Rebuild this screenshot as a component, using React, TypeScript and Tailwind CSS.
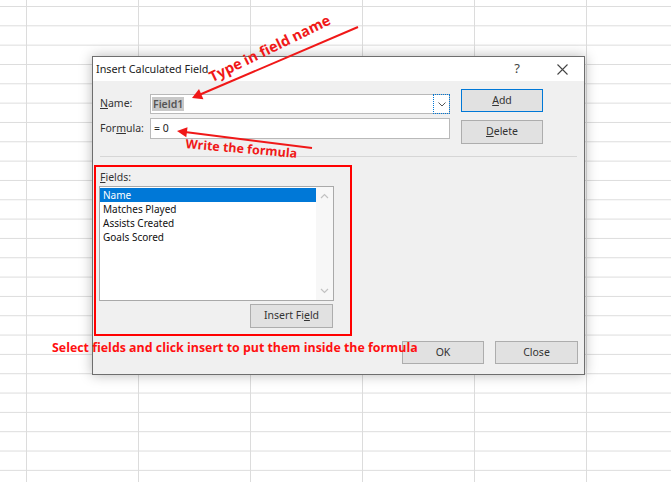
import React from "react";

const fields = ["Name", "Matches Played", "Assists Created", "Goals Scored"];

const uiFont = { fontFamily: '"Noto Sans", "Open Sans", sans-serif' };

const Chevron = ({ up }: { up?: boolean }) => (
  <svg width="9" height="6" viewBox="0 0 9 6">
    <path
      d={up ? "M1 5 L4.5 1.5 L8 5" : "M1 1 L4.5 4.5 L8 1"}
      fill="none"
      stroke="#c2c2c2"
      strokeWidth="1.2"
    />
  </svg>
);

const WinButton = ({
  children,
  className = "",
}: {
  children: React.ReactNode;
  className?: string;
}) => (
  <div
    className={`flex items-center justify-center bg-[#e1e1e1] border border-[#adadad] text-[10.5px] text-[#333] ${className}`}
  >
    {children}
  </div>
);

const App = () => {
  return (
    <div
      className="relative w-[671px] h-[482px] overflow-hidden bg-white pl-[92px] pt-[56px] bg-[image:linear-gradient(to_right,#dcdcdc_1px,transparent_1px),linear-gradient(to_bottom,#dcdcdc_1px,transparent_1px)] bg-size-[112px_19.33px] bg-position-[26px_6px]"
      style={uiFont}
    >
      {/* dialog */}
      <div className="w-[493px] h-[319px] border border-[#6e6e6e] bg-[#f0f0f0] shadow-[0_0_12px_rgba(0,0,0,0.28)] flex flex-col">
        <div className="h-[24px] bg-white flex items-center pl-[3px] pr-[16px] text-[10.8px] text-[#222]">
          <span>Insert Calculated Field</span>
          <span className="ml-auto mr-[37px] text-[13px] text-[#444]">?</span>
          <svg width="11" height="11" viewBox="0 0 11 11">
            <path d="M0.5 0.5 L10.5 10.5 M10.5 0.5 L0.5 10.5" stroke="#444" strokeWidth="1.1" />
          </svg>
        </div>

        <div className="flex pt-[8px]">
          <div className="flex flex-col pl-[7px] pt-[5px] gap-[4px]">
            <div className="flex items-center h-[20px]">
              <span className="w-[50px] text-[10.5px] text-[#333]">
                <span className="underline">N</span>ame:
              </span>
              <div className="w-[300px] h-[20px] bg-white border border-[#b9b9b9] flex items-center">
                <span className="ml-[1px] px-[1px] bg-[#c8c8c8] text-[10.5px] font-semibold text-[#555] leading-[14px]">
                  Field1
                </span>
                <div className="ml-auto w-[17px] h-[20px] -mr-[1px] border border-[#0078d7] border-dotted flex items-center justify-center">
                  <svg width="8" height="5" viewBox="0 0 8 5">
                    <path d="M0.5 0.5 L4 4 L7.5 0.5" fill="none" stroke="#555" strokeWidth="1" />
                  </svg>
                </div>
              </div>
            </div>
            <div className="flex items-center h-[21px]">
              <span className="w-[50px] text-[10.5px] text-[#333]">
                For<span className="underline">m</span>ula:
              </span>
              <div className="w-[300px] h-[21px] bg-white border border-[#b9b9b9] flex items-center pl-[3px] text-[10.5px] text-[#222]">
                = 0
              </div>
            </div>
          </div>
          <div className="flex flex-col ml-[11px] gap-[8px]">
            <WinButton className="w-[82px] h-[23px] !border-[#0078d7]">
              <span className="underline">A</span>dd
            </WinButton>
            <WinButton className="w-[82px] h-[24px]">
              <span className="underline">D</span>elete
            </WinButton>
          </div>
        </div>

        <div className="mt-[12px] ml-[7px] w-[477px] border-t border-[#d6d6d6]" />

        <div className="mt-[8px] ml-[1px] w-[258px] h-[171px] border-2 border-[#ff0000] pt-[3px] flex flex-col">
          <div className="pl-[4px] text-[10.5px] leading-[15px] text-[#333]">
            <span className="underline">F</span>ields:
          </div>
          <div className="mt-[1px] ml-[3px] w-[235px] h-[115px] bg-white border border-[#a9a9a9] flex">
            <div className="flex-1 pt-[1px] text-[10px] text-[#111]">
              {fields.map((f, i) => (
                <div
                  key={f}
                  className={`h-[14px] leading-[14px] pl-[3px] ${
                    i === 0 ? "bg-[#0078d7] text-white" : ""
                  }`}
                >
                  {f}
                </div>
              ))}
            </div>
            <div className="w-[17px] bg-[#f7f7f7] flex flex-col items-center justify-between py-[6px]">
              <Chevron up />
              <Chevron />
            </div>
          </div>
          <WinButton className="mt-[3px] ml-[154px] w-[83px] h-[24px]">
            Insert Fi<span className="underline">e</span>ld
          </WinButton>
        </div>

        <div className="mt-[5px] flex justify-end gap-[11px] pr-[6px]">
          <WinButton className="w-[82px] h-[23px]">OK</WinButton>
          <WinButton className="w-[83px] h-[23px]">Close</WinButton>
        </div>
      </div>

      {/* annotations */}
      <svg
        className="absolute left-0 top-0 pointer-events-none"
        width="671"
        height="482"
        viewBox="0 0 671 482"
      >
        <g fill="#f01818" stroke="none">
          <line x1="358" y1="27" x2="199" y2="95" stroke="#f01818" strokeWidth="2" />
          <polygon points="192,98 203.4,99.2 199,89" />
          <line x1="312" y1="148" x2="185" y2="132" stroke="#f01818" strokeWidth="2" />
          <polygon points="177,131 186.3,137.2 187.5,127.3" />
          <text
            x="0"
            y="0"
            transform="translate(272 53) rotate(-26)"
            textAnchor="middle"
            fontFamily="Open Sans, sans-serif"
            fontWeight="700"
            fontSize="14.5"
          >
            Type in field name
          </text>
          <text
            x="0"
            y="0"
            transform="translate(241 153) rotate(5)"
            textAnchor="middle"
            fontFamily="Open Sans, sans-serif"
            fontWeight="700"
            fontSize="12.5"
          >
            Write the formula
          </text>
        </g>
      </svg>
      <div className="absolute left-[52px] top-[340px] text-[12.4px] font-bold text-[#ff1010] whitespace-nowrap leading-[16px] font-['Open_Sans',sans-serif]">
        Select fields and click insert to put them inside the formula
      </div>
    </div>
  );
};

export default App;
